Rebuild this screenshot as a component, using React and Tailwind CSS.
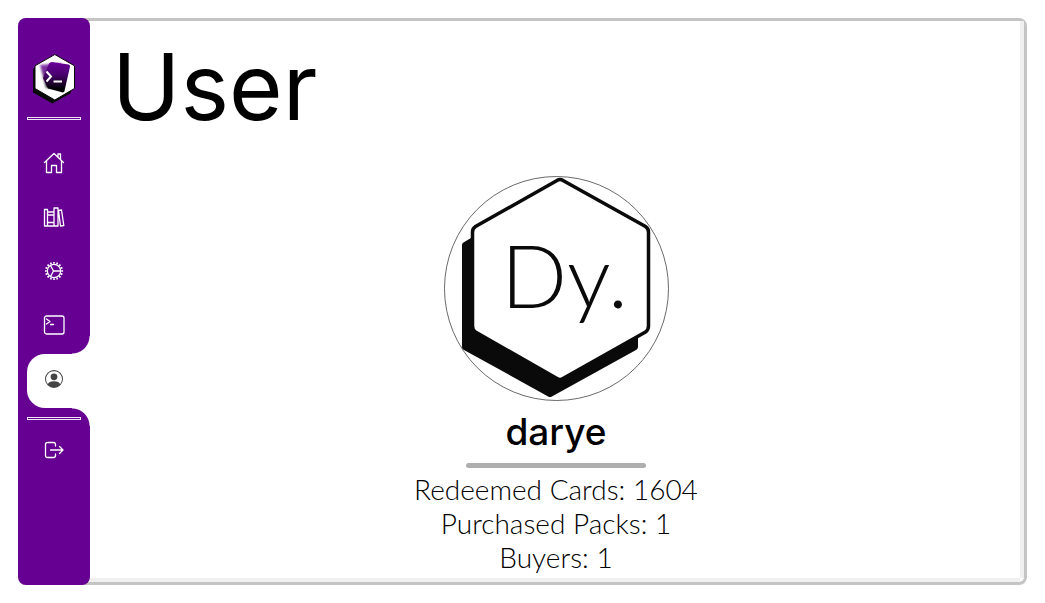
import { BsPersonCircle } from "react-icons/bs";

function BrandLogo() {
  return (
    <svg viewBox="0 0 50 56" className="h-14 w-[50px]" aria-hidden="true">
      <defs>
        <linearGradient id="deck" x1="0" y1="0" x2="0" y2="1">
          <stop offset="0" stopColor="#6a0099" />
          <stop offset="0.4" stopColor="#4b0070" />
          <stop offset="0.9" stopColor="#000" />
        </linearGradient>
        <filter id="soften" x="-20%" y="-20%" width="140%" height="140%">
          <feGaussianBlur stdDeviation="0.8" />
        </filter>
      </defs>
      <path d="M4 19L23 8L42 22V43L23.500 53.500L4 42.500Z" fill="#0a0a0a" />
      <path d="M25.800 4.500L45.500 15.800V38.500L25.800 50L6 38.500V15.800Z" fill="#fff" stroke="#0a0a0a" />
      <path d="M11 15L32 13L29 38L17 38Z" fill="url(#deck)" opacity="0.8" filter="url(#soften)" />
      <path d="M20 13.500Q21 12 23 12L39.500 14.500Q41.200 15 41 16.500L35.500 41Q35 42.800 33 42.300L19 38.500L14 28Z" fill="url(#deck)" />
      <path d="M17.500 21.500L22 26.500L17.500 31.500" fill="none" stroke="#fff" strokeWidth="2" />
      <path d="M24.500 31.500H33" stroke="#fff" strokeWidth="2" />
    </svg>
  );
}

function LineIcon({ children }) {
  return (
    <svg
      viewBox="0 0 22 22"
      className="size-[22px]"
      fill="none"
      stroke="currentColor"
      strokeWidth="1.300"
      strokeLinejoin="round"
      strokeLinecap="round"
      aria-hidden="true"
    >
      {children}
    </svg>
  );
}

function HomeIcon() {
  return (
    <LineIcon>
      <path d="M1.500 10.500L11 1.500L20.500 10.500M3.500 9V20.500H8.500V13.500H13.500V20.500H18.500V9M15 5V2H17.500V7.500" />
    </LineIcon>
  );
}

function BooksIcon() {
  return (
    <LineIcon>
      <path d="M1.500 3.500H4.500V20H1.500ZM4.500 6H11V20H4.500ZM4.500 9H11M4.500 16.500H11M11 2H15V20H11ZM15.500 4.500L18.500 4L20.800 19.500L17.500 20Z" />
    </LineIcon>
  );
}

function GearIcon() {
  return (
    <LineIcon>
      <circle cx="11" cy="11" r="6.700" />
      <circle
        cx="11"
        cy="11"
        r="8.200"
        strokeWidth="1.800"
        strokeLinecap="butt"
        pathLength="32"
        strokeDasharray="1 1"
        strokeDashoffset="0.500"
      />
      <path d="M10.500 11H17.500M7.500 5.500L10.500 11L7.500 16.500" />
    </LineIcon>
  );
}

function TerminalIcon() {
  return (
    <LineIcon>
      <rect x="1.500" y="2" width="19.500" height="18" rx="2" />
      <path d="M3.500 5L7 7.500L3.500 10M7.500 10.500H10.500" />
    </LineIcon>
  );
}

function LogoutIcon() {
  return (
    <LineIcon>
      <path d="M12.500 7V5.500Q12.500 3.500 10.500 3.500H4.500Q2.500 3.500 2.500 5.500V16.500Q2.500 18.500 4.500 18.500H10.500Q12.500 18.500 12.500 16.500V15M7.500 11H19.500M16.500 7.500L20 11L16.500 14.500" />
    </LineIcon>
  );
}

const links = [
  { label: "Home", href: "#home", icon: <HomeIcon /> },
  { label: "Library", href: "#library", icon: <BooksIcon /> },
  { label: "Settings", href: "#settings", icon: <GearIcon /> },
  { label: "Console", href: "#console", icon: <TerminalIcon /> },
  { label: "User", href: "#user", icon: <BsPersonCircle className="size-[18px]" />, active: true },
];

function NavLink({ label, href, icon, active }) {
  return (
    <li className={active ? "relative rounded-l-[18px] bg-white text-[#444444]" : "text-white"}>
      {active && (
        <>
          <span className="absolute right-0 bottom-full size-[18px] bg-[radial-gradient(circle_at_0_0,transparent_17px,white_18px)]" />
          <span className="absolute top-full right-0 size-[18px] bg-[radial-gradient(circle_at_0_100%,transparent_17px,white_18px)]" />
        </>
      )}
      <a
        href={href}
        aria-label={label}
        aria-current={active ? "page" : undefined}
        className="flex h-[54px] w-[54px] items-center justify-center pb-1"
      >
        {icon}
      </a>
    </li>
  );
}

function Divider() {
  return <hr className="relative mr-[9px] h-[3px] border border-white/90" />;
}

function Sidebar() {
  return (
    <nav className="-my-[3px] w-[72px] shrink-0 rounded-lg bg-[#650092] pt-8 pl-[9px]">
      <a href="#top" aria-label="Start" className="mr-[9px] mb-[11px] flex justify-center">
        <BrandLogo />
      </a>
      <Divider />
      <ul className="mt-[18px] mb-[9px]">
        {links.map((link) => (
          <NavLink key={link.label} {...link} />
        ))}
      </ul>
      <Divider />
      <button
        type="button"
        aria-label="Log out"
        className="mt-[3px] flex h-[54px] w-[54px] items-center justify-center text-white"
      >
        <LogoutIcon />
      </button>
    </nav>
  );
}

function Avatar() {
  return (
    <svg viewBox="0 0 225 225" className="size-[225px]" role="img" aria-label="Dy.">
      <path
        d="M21 69L116 12L191 69V171L106 218L21 171Z"
        fill="#0a0a0a"
        stroke="#0a0a0a"
        strokeWidth="6"
        strokeLinejoin="round"
      />
      <path
        d="M113 4.500Q116 2.500 119 4.500L201.500 50.500Q204.500 52.500 204.500 56V150Q204.500 154 201.500 156L119 202.500Q116 204.500 113 202.500L31.500 156Q28.500 154 28.500 150V56Q28.500 52.500 31.500 50.500Z"
        fill="#fff"
        stroke="#0a0a0a"
        strokeWidth="3.500"
      />
      <text
        x="57"
        y="132"
        fontSize="87"
        fontWeight="300"
        fontFamily="Lato, 'Open Sans', sans-serif"
        fill="#0a0a0a"
      >
        Dy.
      </text>
      <circle cx="112.500" cy="112.500" r="112" fill="none" stroke="#444" strokeWidth="0.800" />
    </svg>
  );
}

export default function App() {
  return (
    <div className="flex h-screen bg-white p-[18px] font-[Inter,sans-serif] text-black">
      <div className="flex min-w-0 flex-1 rounded-lg border-y-3 border-r-3 border-[#c4c4c4]">
        <Sidebar />
        <div className="grid min-w-0 flex-1 grid-cols-[1fr_4px] grid-rows-[1fr_4px]">
          <main className="flex min-h-0 flex-col overflow-hidden pl-[18px]">
            <h1 className="mt-3 pl-1 text-[92px] leading-[108px] font-normal">User</h1>
            <section className="mt-[35px] mr-4 flex flex-col items-center">
              <Avatar />
              <h2 className="mt-2 text-[37px] leading-[46px] font-medium">darye</h2>
              <hr className="mt-2 h-[5px] w-[180px] rounded-full border-0 bg-[#afafaf]" />
              <div className="mt-1 text-center font-[Lato,sans-serif] text-[28px] leading-[34px] font-light">
                <p>Redeemed Cards: 1604</p>
                <p>Purchased Packs: 1</p>
                <p>Buyers: 1</p>
              </div>
            </section>
          </main>
          <div className="bg-[#f0f0f0]" />
          <div className="bg-[#f0f0f0]" />
        </div>
      </div>
    </div>
  );
}
